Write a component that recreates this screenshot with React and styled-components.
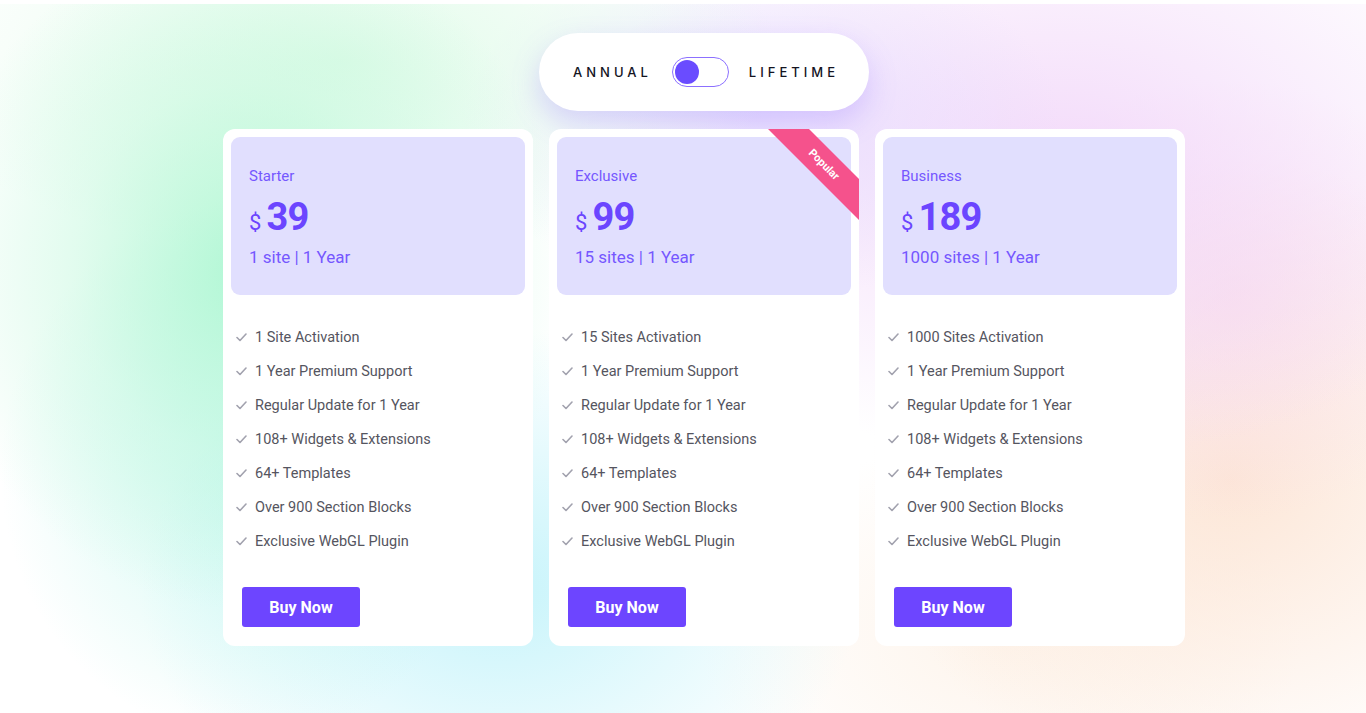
import React from 'react';
import styled, { createGlobalStyle } from 'styled-components';

const GlobalStyle = createGlobalStyle`
  html, body {
    margin: 0;
    padding: 0;
  }
  body {
    font-family: Roboto, "Liberation Sans", sans-serif;
    background: #fff;
  }
`;

const Page = styled.div`
  width: 1366px;
  height: 713px;
  overflow: hidden;
  background:
    linear-gradient(#fff, #fff) top / 100% 4px no-repeat,
    radial-gradient(ellipse 320px 340px at 250px 270px, rgba(165, 246, 205, 0.85), rgba(190, 248, 218, 0.45) 55%, transparent 100%),
    radial-gradient(ellipse 440px 200px at 340px 60px, rgba(215, 250, 226, 0.75), transparent 100%),
    radial-gradient(ellipse 250px 270px at 250px 470px, rgba(185, 246, 236, 0.7), transparent 100%),
    radial-gradient(ellipse 360px 260px at 500px 590px, rgba(190, 242, 250, 0.85), transparent 100%),
    radial-gradient(ellipse 300px 180px at 760px 120px, rgba(222, 212, 255, 0.6), transparent 100%),
    radial-gradient(ellipse 480px 300px at 1060px 160px, rgba(241, 212, 249, 0.85), transparent 100%),
    radial-gradient(ellipse 260px 220px at 1230px 300px, rgba(248, 215, 236, 0.6), transparent 100%),
    radial-gradient(ellipse 360px 320px at 1230px 480px, rgba(252, 226, 208, 0.85), transparent 100%),
    radial-gradient(ellipse 300px 200px at 1000px 640px, rgba(253, 240, 228, 0.7), transparent 100%),
    #fff;
`;

const Content = styled.div`
  display: flex;
  flex-direction: column;
  align-items: center;
  width: 962px;
  margin-left: 223px;
  padding-top: 33px;
`;

const TogglePill = styled.div`
  display: flex;
  align-items: center;
  gap: 20px;
  height: 78px;
  padding: 0 30px 0 34px;
  box-sizing: border-box;
  border-radius: 39px;
  background: #fff;
  box-shadow: 0 12px 28px rgba(150, 120, 255, 0.28);
  margin-bottom: 18px;
`;

const ToggleLabel = styled.span`
  font-family: Inter, "Open Sans", sans-serif;
  font-size: 13px;
  font-weight: 500;
  letter-spacing: 4px;
  color: #14141f;
`;

const Switch = styled.div`
  flex-shrink: 0;
  width: 57px;
  height: 30px;
  box-sizing: border-box;
  border: 1.5px solid #8c70ff;
  border-radius: 15px;
  display: flex;
  align-items: center;
  padding-left: 2px;
`;

const Knob = styled.div`
  width: 24px;
  height: 24px;
  border-radius: 50%;
  background: #6a4cff;
`;

const Cards = styled.div`
  display: grid;
  grid-template-columns: 310px 310px 310px;
  gap: 16px;
  width: 100%;
`;

const Card = styled.div`
  position: relative;
  overflow: hidden;
  background: #fff;
  border-radius: 12px;
  padding: 8px 8px 19px;
  box-sizing: border-box;
  height: 517px;
  display: flex;
  flex-direction: column;
`;

const Header = styled.div`
  background: #e1dffe;
  border-radius: 9px;
  padding: 30px 18px 30px;
  height: 158px;
  box-sizing: border-box;
`;

const PlanName = styled.div`
  font-size: 15px;
  line-height: 18px;
  color: #7557ff;
  margin-bottom: 12px;
`;

const Price = styled.div`
  display: flex;
  align-items: baseline;
  color: #6b45ff;
  line-height: 40px;
`;

const Currency = styled.span`
  font-size: 22px;
  margin-right: 5px;
`;

const Amount = styled.span`
  font-size: 38px;
  font-weight: 700;
  letter-spacing: -0.8px;
`;

const Sites = styled.div`
  margin-top: 4px;
  font-size: 17px;
  line-height: 20px;
  color: #7557ff;
`;

const Features = styled.ul`
  list-style: none;
  margin: 0;
  padding: 25px 0 0 5px;
`;

const Feature = styled.li`
  display: flex;
  align-items: center;
  gap: 8px;
  height: 34px;
  font-size: 14.5px;
  color: #555560;
`;

const BuyButton = styled.button`
  margin: 29px 0 0 11px;
  width: 118px;
  height: 40px;
  border: none;
  border-radius: 3px;
  background: #6d45ff;
  color: #fff;
  font-family: Roboto, "Liberation Sans", sans-serif;
  font-size: 16px;
  font-weight: 700;
  cursor: pointer;
`;

const Ribbon = styled.span`
  position: absolute;
  top: 21px;
  right: -35px;
  width: 140px;
  height: 29px;
  line-height: 29px;
  text-align: center;
  background: #f5528c;
  color: #fff;
  font-size: 11px;
  font-weight: 700;
  transform: rotate(45deg);
`;

const Check = () => (
  <svg width="11" height="9" viewBox="0 0 11 9" fill="none">
    <polyline
      points="1,4.5 4,7.5 10,1"
      stroke="#a2a2ae"
      strokeWidth="1.6"
      strokeLinecap="round"
      strokeLinejoin="round"
    />
  </svg>
);

const plans = [
  { name: 'Starter', price: '39', sites: '1 site | 1 Year', first: '1 Site Activation' },
  { name: 'Exclusive', price: '99', sites: '15 sites | 1 Year', first: '15 Sites Activation', popular: true },
  { name: 'Business', price: '189', sites: '1000 sites | 1 Year', first: '1000 Sites Activation' },
];

const common = [
  '1 Year Premium Support',
  'Regular Update for 1 Year',
  '108+ Widgets & Extensions',
  '64+ Templates',
  'Over 900 Section Blocks',
  'Exclusive WebGL Plugin',
];

const App = () => {
  return (
    <Page>
      <GlobalStyle />
      <Content>
        <TogglePill>
          <ToggleLabel>ANNUAL</ToggleLabel>
          <Switch>
            <Knob />
          </Switch>
          <ToggleLabel>LIFETIME</ToggleLabel>
        </TogglePill>

        <Cards>
          {plans.map(plan => (
            <Card key={plan.name}>
              {plan.popular && <Ribbon>Popular</Ribbon>}
              <Header>
                <PlanName>{plan.name}</PlanName>
                <Price>
                  <Currency>$</Currency>
                  <Amount>{plan.price}</Amount>
                </Price>
                <Sites>{plan.sites}</Sites>
              </Header>
              <Features>
                {[plan.first, ...common].map(item => (
                  <Feature key={item}>
                    <Check />
                    {item}
                  </Feature>
                ))}
              </Features>
              <div>
                <BuyButton>Buy Now</BuyButton>
              </div>
            </Card>
          ))}
        </Cards>
      </Content>
    </Page>
  );
};

export default App;
